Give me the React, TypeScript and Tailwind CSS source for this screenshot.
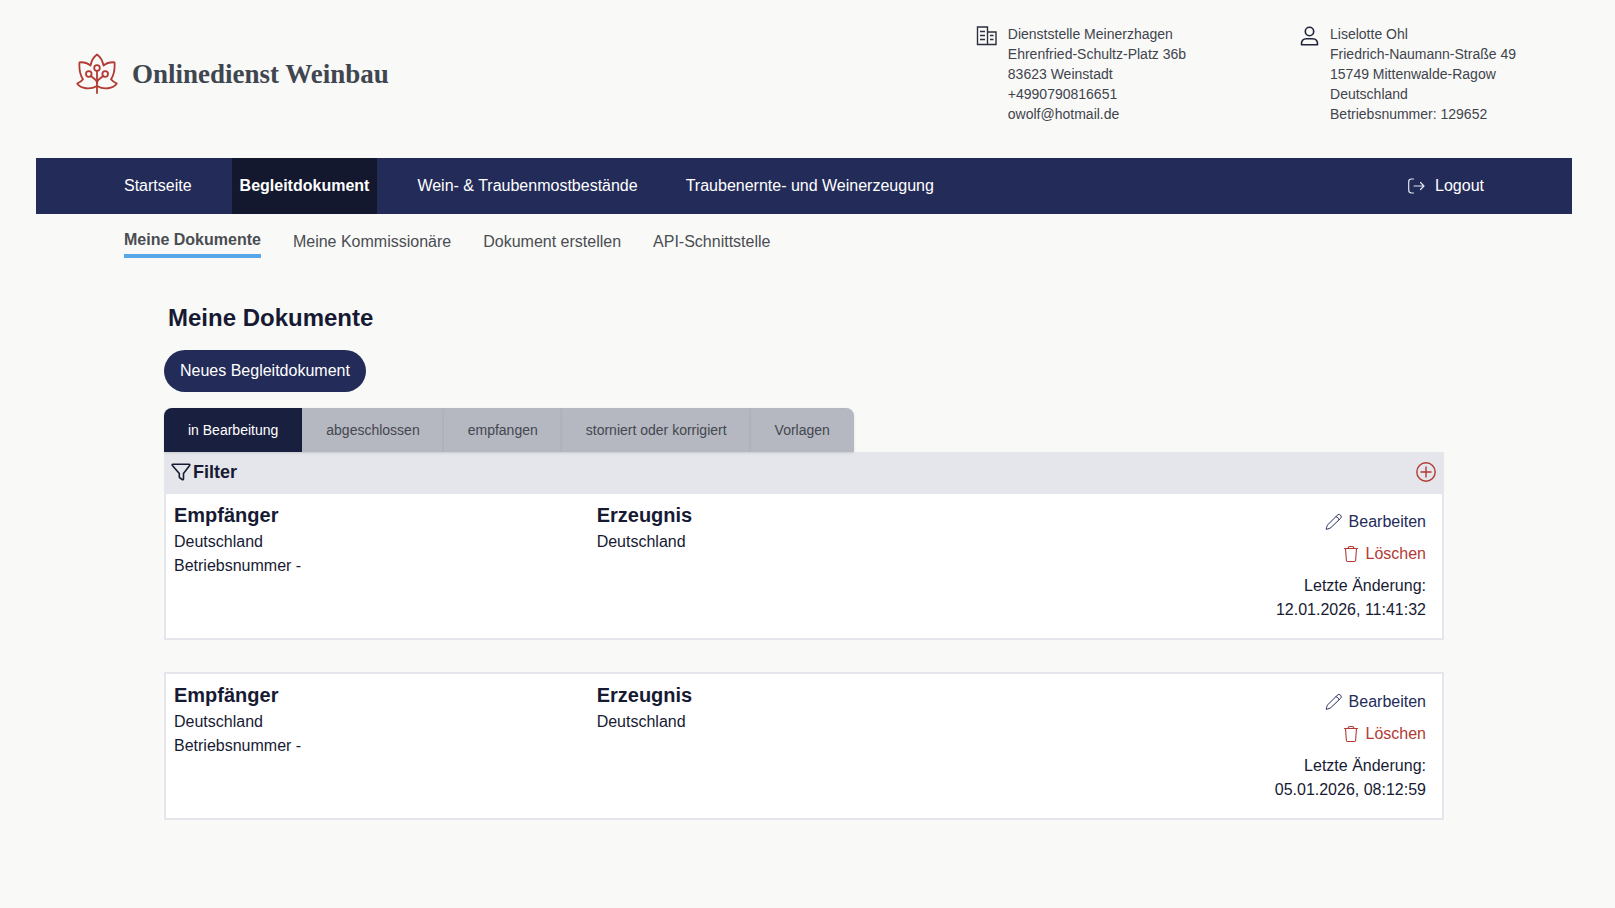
import React from 'react';

interface DokumentEintrag {
  id: number;
  empfaenger: string;
  betriebsnummer: string;
  erzeugnis: string;
  geaendert: string;
}

const navLinks = ['Startseite', 'Begleitdokument', 'Wein- & Traubenmostbestände', 'Traubenernte- und Weinerzeugung'];
const subLinks = ['Meine Dokumente', 'Meine Kommissionäre', 'Dokument erstellen', 'API-Schnittstelle'];
const tabs = ['in Bearbeitung', 'abgeschlossen', 'empfangen', 'storniert oder korrigiert', 'Vorlagen'];

const dienststelle = ['Dienststelle Meinerzhagen', 'Ehrenfried-Schultz-Platz 36b', '83623 Weinstadt', '+4990790816651', 'owolf@hotmail.de'];
const betrieb = ['Liselotte Ohl', 'Friedrich-Naumann-Straße 49', '15749 Mittenwalde-Ragow', 'Deutschland', 'Betriebsnummer: 129652'];

const dokumente: DokumentEintrag[] = [
  { id: 1, empfaenger: 'Deutschland', betriebsnummer: '-', erzeugnis: 'Deutschland', geaendert: '12.01.2026, 11:41:32' },
  { id: 2, empfaenger: 'Deutschland', betriebsnummer: '-', erzeugnis: 'Deutschland', geaendert: '05.01.2026, 08:12:59' },
];

const LeafIcon = () => (
  <svg width="42" height="42" viewBox="0 0 42 42" fill="none" stroke="#b23a34" strokeWidth="1.8" strokeLinecap="round" strokeLinejoin="round">
    <path d="M21 40V18" />
    <path d="M21 1.500C17.500 4 15.500 7.500 14.500 12.500C11.500 10 8 9 3.500 9.300C3 16 4 22 7 26.300C5.500 28.500 3.500 29.500 1.200 30.500C5 35.800 14 37 21 33C28 37 37 35.800 40.800 30.500C38.500 29.500 36.500 28.500 35 26.300C38 22 39 16 38.500 9.300C34 9 30.500 10 27.500 12.500C26.500 7.500 24.500 4 21 1.500z" />
    <path d="M7 26.300C12 26 17 28 21 33C25 28 30 26 35 26.300" stroke="none" />
    <circle cx="21" cy="15" r="2.800" />
    <circle cx="12.800" cy="21" r="2.800" />
    <circle cx="29.200" cy="21" r="2.800" />
    <path d="M14.800 23l4.400 3.500c1.200 1 1.800 2 1.800 3.500c0-1.500.6-2.500 1.800-3.500l4.400-3.500" />
  </svg>
);

const OfficeIcon = () => (
  <svg width="22" height="20" viewBox="0 0 22 20" fill="none" stroke="#2b2f3f" strokeWidth="1.400" className="mt-[2px]">
    <path d="M1.500 1h10v17.500h-10zM11.500 6h8.500v12.500h-8.500" />
    <path d="M4 5.500h5M4 9.500h5M4 13.500h5M14 9.500h3.500M14 13.500h3.500" />
  </svg>
);

const PersonIcon = () => (
  <svg width="20" height="20" viewBox="0 0 20 20" fill="none" stroke="#20243a" strokeWidth="1.600" strokeLinejoin="round" className="mt-[2px]">
    <circle cx="9.500" cy="5.500" r="4.200" />
    <path d="M1.500 18.800c-.3-4 1.500-6 5-6h6c3.500 0 5.300 2 5 6z" />
  </svg>
);

const LogoutIcon = () => (
  <svg width="18" height="16" viewBox="0 0 18 16" fill="none" stroke="#e3e5f0" strokeWidth="1.200" strokeLinecap="round" strokeLinejoin="round">
    <path d="M6.500 1H4.500C2.500 1 1.700 1.800 1.700 4v8c0 2.200.8 3 2.800 3h2M7 8h10M13.500 4.500L17 8 13.500 11.500" />
  </svg>
);

const FilterIcon = () => (
  <svg width="20" height="20" viewBox="0 0 20 20" fill="none" stroke="#171a33" strokeWidth="1.600" strokeLinejoin="round">
    <path d="M2 2.200h16c.9 0 1 .7.600 1.300L12.500 11.500v5.200c0 .8-.5 1.300-1.200 1l-2.200-1.700c-.5-.3-.8-.7-.8-1.300v-3.200L1.400 3.500c-.4-.6-.3-1.300.6-1.300z" />
  </svg>
);

const PlusCircleIcon = () => (
  <svg width="20" height="20" viewBox="0 0 20 20" fill="none" stroke="#b23a34" strokeWidth="1.400">
    <circle cx="10" cy="10" r="9.200" />
    <path d="M10 4.500v11M4.500 10h11" />
  </svg>
);

const PencilIcon = () => (
  <svg width="18" height="18" viewBox="0 0 18 18" fill="none" stroke="currentColor" strokeWidth="1" strokeLinejoin="round">
    <path d="M1.200 16.300c.4-2.300.9-3.700 1.900-4.900L12.300 2.200c1-1 2.200-1 3.200 0s1 2.200 0 3.200L6.100 14.400c-1.200 1-2.600 1.500-4.900 1.900zM10.800 3.700c1.600.3 2.800 1.500 3.200 3.200" />
  </svg>
);

const TrashIcon = () => (
  <svg width="16" height="18" viewBox="0 0 16 18" fill="none" stroke="currentColor" strokeWidth="1.100" strokeLinecap="round" strokeLinejoin="round">
    <path d="M1.500 3.500h13M4.800 3.500c.3-1.400 1-2 2.200-2h2c1.200 0 1.900.6 2.200 2M2.500 3.500l.9 12c.1.700.4 1 1 1h7.200c.6 0 .9-.3 1-1l.9-12" />
  </svg>
);

const Adresse: React.FC<{ icon: React.ReactNode; lines: string[] }> = ({ icon, lines }) => (
  <div className="flex gap-[10px]">
    {icon}
    <address className="text-sm not-italic text-[#3f444d]">
      {lines.map(line => <div key={line}>{line}</div>)}
    </address>
  </div>
);

const DokumentZeile: React.FC<{ dokument: DokumentEintrag }> = ({ dokument }) => (
  <div className="grid grid-cols-3 pl-2">
    <div className="py-2">
      <h2 className="mb-[2px] text-xl leading-[26px] font-bold">Empfänger</h2>
      <p>{dokument.empfaenger}</p>
      <p>Betriebsnummer {dokument.betriebsnummer}</p>
    </div>
    <div className="py-2">
      <h2 className="mb-[2px] text-xl leading-[26px] font-bold">Erzeugnis</h2>
      <p>{dokument.erzeugnis}</p>
    </div>
    <div className="flex flex-col items-end gap-2 p-4 text-right">
      <a href="#bearbeiten" className="flex items-center gap-[6px] text-[#232b59]"><PencilIcon /><span>Bearbeiten</span></a>
      <button type="button" className="flex items-center gap-[6px] text-[#b23a34]"><TrashIcon /><span>Löschen</span></button>
      <p>Letzte Änderung:<br />{dokument.geaendert}</p>
    </div>
  </div>
);

export default function App() {
  return (
    <div className="min-h-screen bg-[#f9f9f7] pr-[7px] font-['Liberation_Sans',Arial,sans-serif] text-base text-[#171a33]">
      <div className="mx-auto max-w-[1536px]">
        <header className="flex items-start justify-between pt-6 pr-14 pb-[34px] pl-10">
          <a href="#start" className="flex items-center gap-[14px] pt-[29px]">
            <LeafIcon />
            <span className="font-['Liberation_Serif',serif] text-[27px] leading-[42px] font-bold text-[#3f464f]">Onlinedienst Weinbau</span>
          </a>
          <div className="flex gap-[114px]">
            <Adresse icon={<OfficeIcon />} lines={dienststelle} />
            <Adresse icon={<PersonIcon />} lines={betrieb} />
          </div>
        </header>

        <nav className="flex h-14 items-stretch justify-between bg-[#232b59] px-20 text-white">
          <div className="flex gap-8">
            {navLinks.map((link, i) => (
              <a key={link} href="#nav" className={i === 1 ? 'flex items-center bg-[#14182f] px-2 font-bold' : 'flex items-center px-2'}>{link}</a>
            ))}
          </div>
          <button type="button" className="flex items-center gap-[10px] px-2"><LogoutIcon /><span>Logout</span></button>
        </nav>

        <nav className="flex items-start gap-8 px-[88px] pt-[14px] text-[#4a4d52]">
          {subLinks.map((link, i) => (
            <a key={link} href="#sub" className={i === 0 ? 'border-b-4 border-[#58a6ea] pb-[2px] font-bold' : 'pt-[2px]'}>{link}</a>
          ))}
        </nav>

        <main className="mx-auto max-w-[1280px] pt-11 pb-16">
          <h1 className="px-1 text-2xl font-bold">Meine Dokumente</h1>
          <button type="button" className="mt-4 block h-[42px] rounded-full bg-[#232b59] px-4 text-white">Neues Begleitdokument</button>

          <div className="mt-4 flex">
            <div className="relative flex overflow-hidden rounded-t-lg text-sm shadow-sm" role="tablist">
              {tabs.map((tab, i) => (
                <button
                  key={tab}
                  type="button"
                  role="tab"
                  aria-selected={i === 0}
                  className={i === 0 ? 'h-11 bg-[#191f3f] px-6 text-white shadow-sm' : 'h-11 bg-[#b5b7c1] px-6 text-[#44474f] shadow-sm'}
                >
                  {tab}
                </button>
              ))}
            </div>
          </div>

          <div className="border-2 border-t-0 border-[#e5e6eb] bg-white">
            <div className="flex h-[42px] items-center justify-between bg-[#e5e6eb] pr-[6px] pb-[2px] pl-[5px]">
              <h2 className="flex items-center gap-[2px] text-lg font-bold"><FilterIcon />Filter</h2>
              <button type="button" aria-label="Filter öffnen"><PlusCircleIcon /></button>
            </div>
            <DokumentZeile dokument={dokumente[0]} />
          </div>

          {dokumente.slice(1).map(dokument => (
            <div key={dokument.id} className="mt-8 border-2 border-[#e5e6eb] bg-white">
              <DokumentZeile dokument={dokument} />
            </div>
          ))}
        </main>
      </div>
    </div>
  );
}
